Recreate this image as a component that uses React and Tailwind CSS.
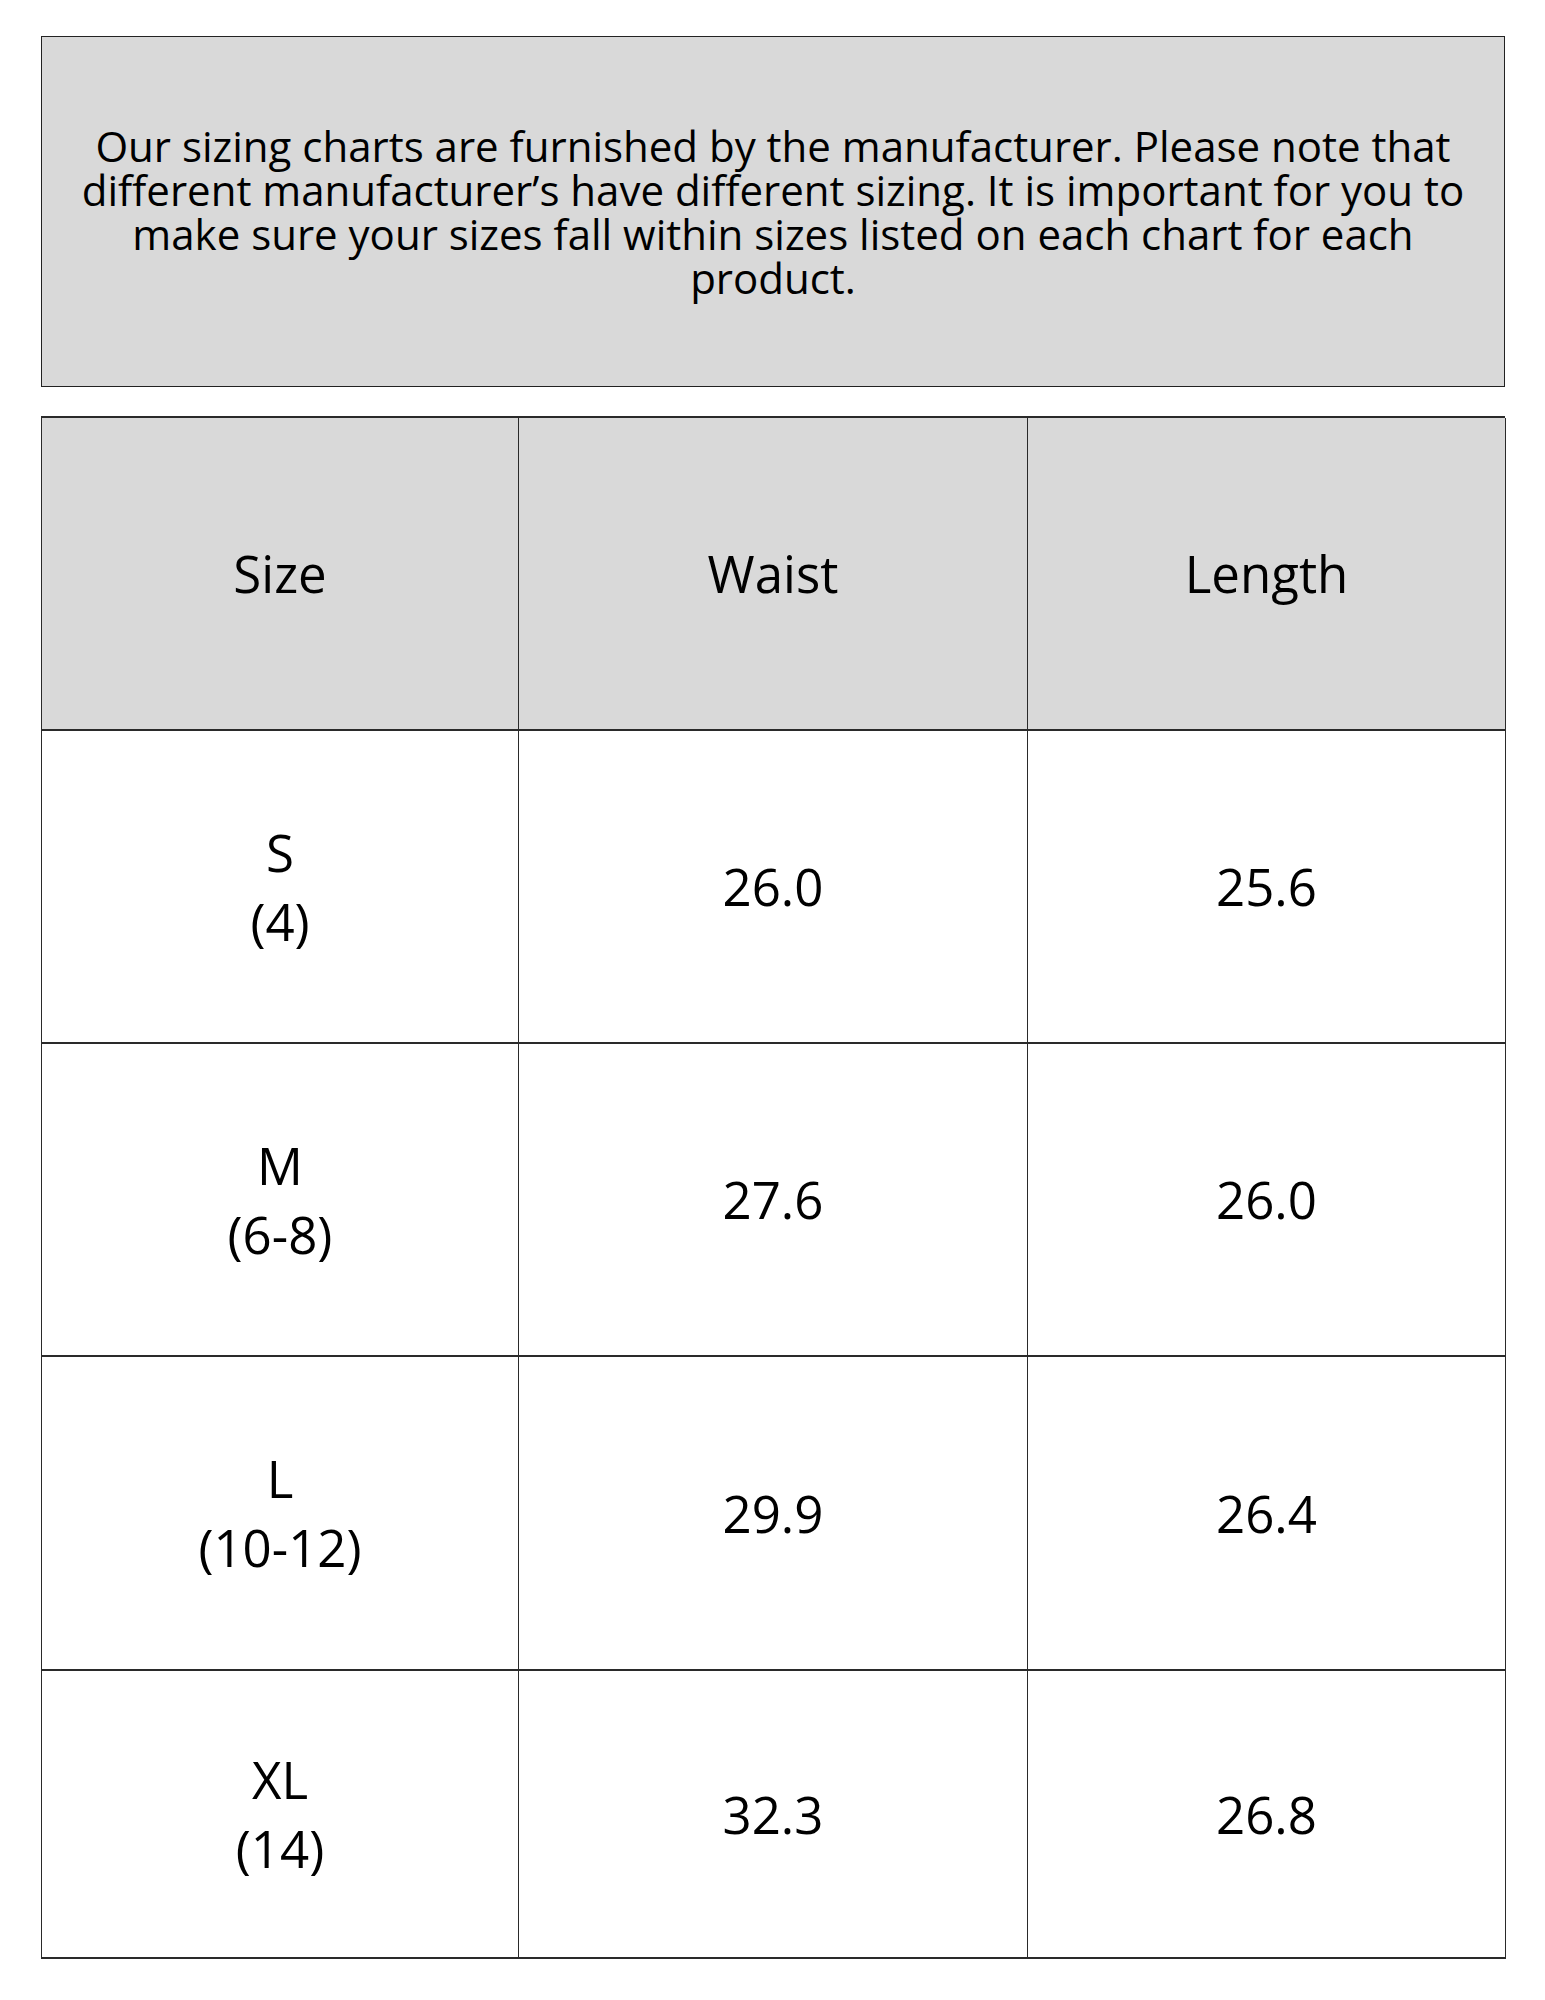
import React from 'react'

const rows = [
    { size: 'S', range: '(4)', waist: '26.0', length: '25.6', h: 'h-[313px]' },
    { size: 'M', range: '(6-8)', waist: '27.6', length: '26.0', h: 'h-[313px]' },
    { size: 'L', range: '(10-12)', waist: '29.9', length: '26.4', h: 'h-[314px]' },
    { size: 'XL', range: '(14)', waist: '32.3', length: '26.8', h: 'h-[288px]' },
]

const cell = 'flex items-center justify-center text-center border-r-[1.5px] border-b-2 border-[#2a2a2a]'

export default function App() {
    return (
        <div className="min-h-screen bg-white pt-[36px] pl-[41px] text-black" style={{ fontFamily: '"Open Sans", "Noto Sans", sans-serif' }}>
            <div className="w-[1464px]">
                <div className="h-[351px] flex items-center justify-center border-[1.5px] border-[#222] bg-[#d9d9d9]">
                    <p className="w-[1430px] text-[42px] leading-[44px] text-center">
                        Our sizing charts are furnished by the manufacturer. Please note that different manufacturer’s have different sizing. It is important for you to make sure your sizes fall within sizes listed on each chart for each product.
                    </p>
                </div>

                <div className="mt-[29px] grid grid-cols-[477px_509px_478px] border-t-2 border-l-[1.5px] border-[#2a2a2a] text-[51px]">
                    <div className={`${cell} h-[313px] bg-[#d9d9d9]`}>Size</div>
                    <div className={`${cell} h-[313px] bg-[#d9d9d9]`}>Waist</div>
                    <div className={`${cell} h-[313px] bg-[#d9d9d9]`}>Length</div>
                    {rows.map((r) => (
                        <React.Fragment key={r.size}>
                            <div className={`${cell} ${r.h} flex-col leading-[69px]`}>
                                <span>{r.size}</span>
                                <span>{r.range}</span>
                            </div>
                            <div className={`${cell} ${r.h}`}>{r.waist}</div>
                            <div className={`${cell} ${r.h}`}>{r.length}</div>
                        </React.Fragment>
                    ))}
                </div>
            </div>
        </div>
    )
}
